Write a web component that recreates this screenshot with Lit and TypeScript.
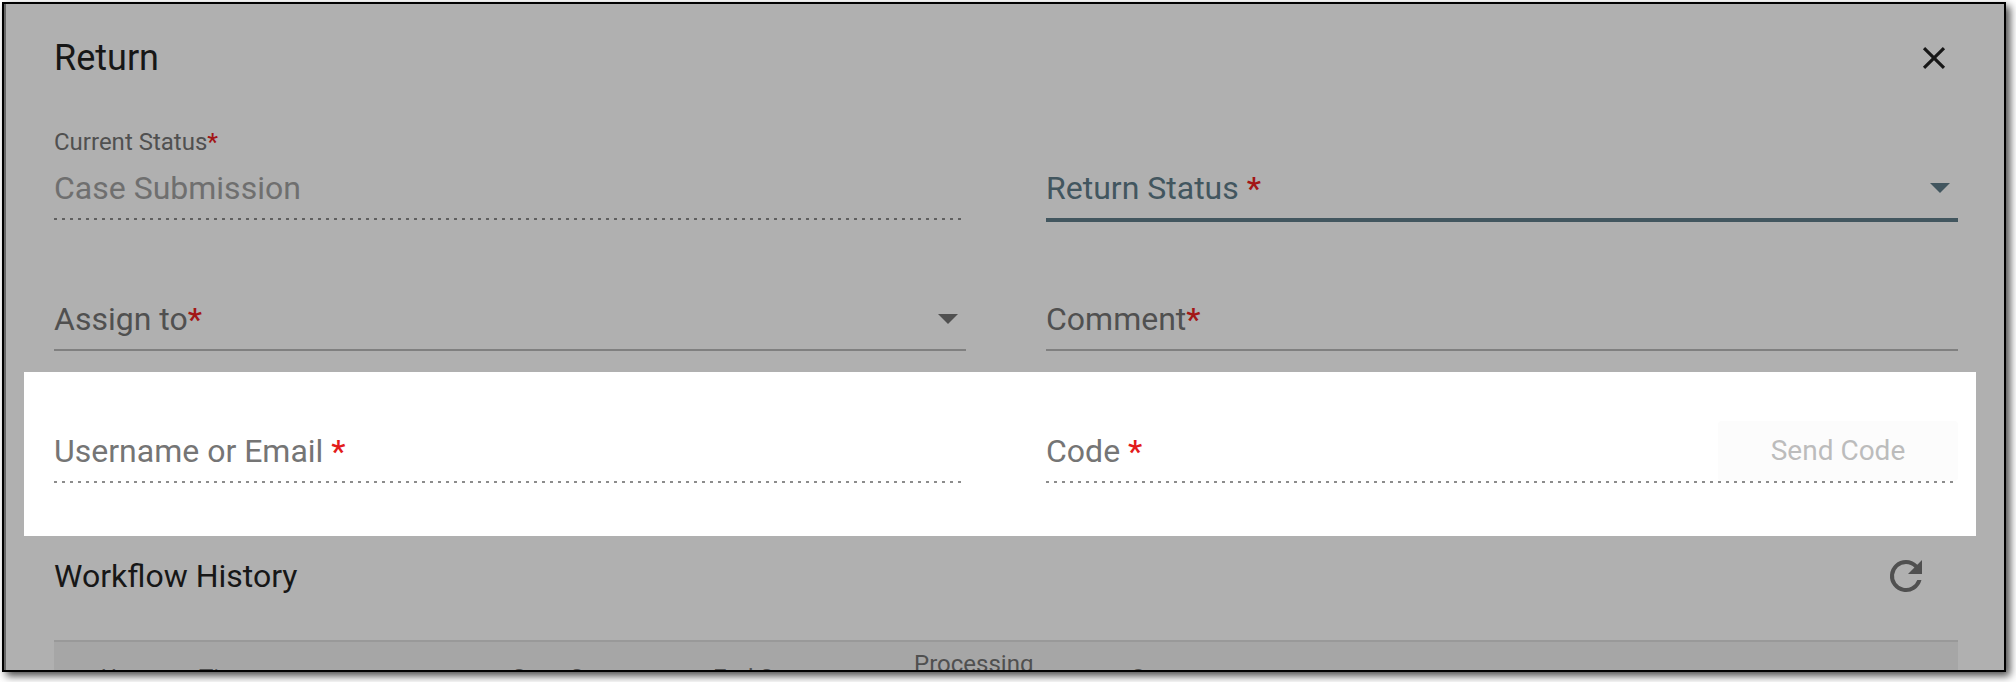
import { LitElement, html, css } from "lit";
import { customElement } from "lit/decorators.js";

@customElement("app-root")
class AppRoot extends LitElement {
  static styles = css`
    :host {
      display: block;
      box-sizing: border-box;
      height: 100vh;
      padding: 2px 10px 10px 2px;
      background: #fff;
      font-family: Roboto, sans-serif;
      font-size: 32px;
      line-height: 40px;
      color: #505050;
    }
    * { box-sizing: border-box; }
    .dialog {
      height: 100%;
      overflow: hidden;
      border: 2px solid #000;
      background: #b0b0b0;
      box-shadow: 4px 4px 8px rgba(0, 0, 0, 0.7);
    }
    .inner { height: 100%; border-left: 2px solid #666; }
    .head {
      display: flex;
      align-items: center;
      justify-content: space-between;
      padding: 30px 46px 0 48px;
      height: 78px;
    }
    h1, h2 { margin: 0; font-weight: 400; color: #171717; }
    h1 { font-size: 36px; line-height: 48px; }
    h2 { font-size: 32px; line-height: 40px; }
    button, input, select {
      font: inherit;
      margin: 0;
      padding: 0;
      border: 0;
      background: none;
      appearance: none;
      outline: none;
      color: inherit;
    }
    svg { display: block; fill: currentColor; }
    .close { width: 48px; height: 48px; display: grid; place-items: center; color: #171717; }
    .row {
      display: grid;
      grid-template-columns: 1fr 1fr;
      gap: 80px;
      padding: 0 46px 0 48px;
    }
    .first { height: 136px; padding-top: 44px; }
    .second { height: 154px; padding-top: 71px; align-items: start; }
    .lit {
      margin: 0 28px 0 18px;
      padding: 49px 18px 0 30px;
      height: 164px;
      background: #fff;
      color: #757575;
    }
    .field { position: relative; display: flex; flex-direction: column; }
    .small { font-size: 24px; line-height: 32px; }
    .control { display: flex; align-items: center; height: 60px; }
    .control label { white-space: pre; }
    .control input, .control select { flex: 1; min-width: 0; height: 60px; }
    .field.floating input { color: #6f6f6f; opacity: 1; }
    .line { height: 2px; background: #808080; }
    .dots {
      height: 2px;
      background: repeating-linear-gradient(90deg, currentColor 0 3px, transparent 3px 8px);
    }
    .lit .dots { color: #8c8c8c; }
    .first .dots { color: #606060; }
    .active { color: #42565f; }
    .active .line { height: 4px; background: #42565f; }
    .star { color: #a31515; font-weight: 500; }
    .lit .star { color: #e31b1b; }
    .arrow { position: absolute; right: 8px; pointer-events: none; }
    .send {
      width: 240px;
      height: 60px;
      border-radius: 4px;
      background: #fcfcfc;
      color: #bcbcbc;
      font-size: 28px;
    }
    .history {
      display: flex;
      align-items: center;
      justify-content: space-between;
      height: 104px;
      padding: 0 74px 24px 48px;
    }
    .refresh { width: 48px; height: 48px; }
    .tablebox { padding: 0 46px 0 48px; }
    table {
      width: 100%;
      border-collapse: collapse;
      border-top: 2px solid #999;
      background: #a6a6a6;
      table-layout: fixed;
      font-size: 24px;
      line-height: 28px;
    }
    th { font-weight: 400; text-align: left; padding: 8px 0; }
    .c0 { width: 47px; }
    .c1 { width: 98px; }
    .c2 { width: 313px; }
    .c3 { width: 201px; }
    .c4 { width: 216px; }
  `;

  arrow() {
    return html`<svg class="arrow" width="20" height="10" viewBox="0 0 20 10" aria-hidden="true"><path d="M0 0h20L10 10z" /></svg>`;
  }

  render() {
    return html`
      <main class="dialog">
        <div class="inner">
          <header class="head">
            <h1>Return</h1>
            <button class="close" aria-label="Close">
              <svg width="38" height="38" viewBox="0 0 24 24"><path d="M19 6.41 17.59 5 12 10.59 6.41 5 5 6.41 10.59 12 5 17.59 6.41 19 12 13.41 17.59 19 19 17.59 13.41 12z" /></svg>
            </button>
          </header>
          <div class="row first">
            <div class="field floating">
              <label class="small" for="current">Current Status<span class="star">*</span></label>
              <div class="control"><input id="current" value="Case Submission" disabled /></div>
              <div class="dots"></div>
            </div>
            <div class="field active">
              <div class="small">&nbsp;</div>
              <div class="control">
                <label for="status">Return Status <span class="star">*</span></label>
                <select id="status"></select>${this.arrow()}
              </div>
              <div class="line"></div>
            </div>
          </div>
          <div class="row second">
            <div class="field">
              <div class="control">
                <label for="assign">Assign to<span class="star">*</span></label>
                <select id="assign"></select>${this.arrow()}
              </div>
              <div class="line"></div>
            </div>
            <div class="field">
              <div class="control">
                <label for="comment">Comment<span class="star">*</span></label>
                <input id="comment" />
              </div>
              <div class="line"></div>
            </div>
          </div>
          <div class="row lit">
            <div class="field">
              <div class="control">
                <label for="user">Username or Email <span class="star">*</span></label>
                <input id="user" disabled />
              </div>
              <div class="dots"></div>
            </div>
            <div class="field">
              <div class="control">
                <label for="code">Code <span class="star">*</span></label>
                <input id="code" disabled />
                <button class="send" disabled>Send Code</button>
              </div>
              <div class="dots"></div>
            </div>
          </div>
          <div class="history">
            <h2>Workflow History</h2>
            <button class="refresh" aria-label="Refresh">
              <svg width="48" height="48" viewBox="0 0 24 24"><path d="M17.65 6.35A7.96 7.96 0 0 0 12 4a8 8 0 1 0 7.73 10h-2.08A6 6 0 1 1 12 6c1.66 0 3.14.69 4.22 1.78L13 11h7V4z" /></svg>
            </button>
          </div>
          <div class="tablebox">
            <table>
              <colgroup>
                <col class="c0" /><col class="c1" /><col class="c2" /><col class="c3" /><col class="c3" /><col class="c4" /><col />
              </colgroup>
              <thead>
                <tr>
                  <td></td>
                  <th>User</th>
                  <th>Time</th>
                  <th>Start Status</th>
                  <th>End Status</th>
                  <th>Processing<br />Time</th>
                  <th>Comment</th>
                </tr>
              </thead>
            </table>
          </div>
        </div>
      </main>
    `;
  }
}
